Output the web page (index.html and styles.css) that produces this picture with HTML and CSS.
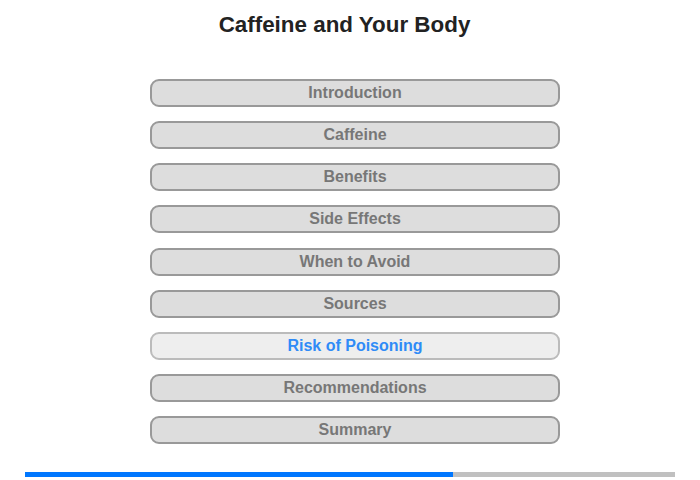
FILE: index.html
```html
<!DOCTYPE html>
<html>
<head>
<meta charset="utf-8">
<link rel="stylesheet" href="styles.css">
</head>
<body>
<h1 class="title">Caffeine and Your Body</h1>
<nav class="menu">
  <div class="item">Introduction</div>
  <div class="item">Caffeine</div>
  <div class="item">Benefits</div>
  <div class="item">Side Effects</div>
  <div class="item">When to Avoid</div>
  <div class="item">Sources</div>
  <div class="item active">Risk of Poisoning</div>
  <div class="item">Recommendations</div>
  <div class="item">Summary</div>
</nav>
<div class="progress"><div class="fill" style="width:428px"></div></div>
</body>
</html>
```
FILE: styles.css
```css
html, body {
  margin: 0;
  padding: 0;
  background: #fff;
  font-family: "Liberation Sans", Arial, sans-serif;
}
body {
  width: 700px;
  height: 480px;
  overflow: hidden;
}
.title {
  margin: 0;
  padding: 12px 11px 0 0;
  font-size: 22.4px;
  line-height: 26px;
  font-weight: bold;
  color: #222;
  text-align: center;
}
.menu {
  display: flex;
  flex-direction: column;
  gap: 14.125px;
  padding: 41px 0 0 150px;
}
.item {
  box-sizing: border-box;
  width: 410px;
  height: 28px;
  border: 2px solid #999;
  border-radius: 9px;
  background: #ddd;
  color: #777;
  font-size: 16px;
  font-weight: bold;
  line-height: 22px;
  padding-top: 1px;
  padding-bottom: 1px;
  text-align: center;
}
.item.active {
  background: #eee;
  border-color: #bbb;
  color: #2f8bf7;
}
.progress {
  margin: 28px 0 0 25px;
  width: 650px;
  height: 5px;
  background: #c0c0c0;
}
.fill {
  height: 100%;
  background: #0077ff;
}
```
